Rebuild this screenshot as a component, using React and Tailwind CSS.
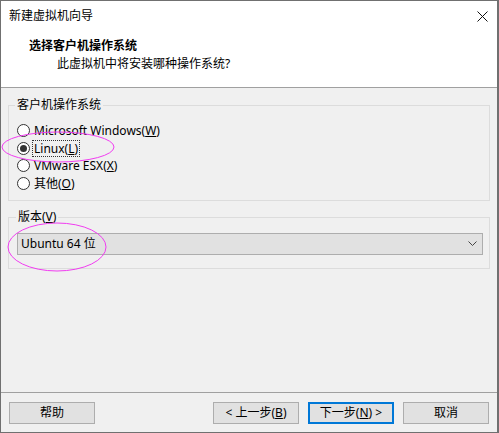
import React from 'react';

const Radio = ({ checked, children, focus }) => (
  <label className="flex items-center h-[17.5px] cursor-default">
    <span className="w-[13px] h-[13px] ml-[8px] rounded-full border border-[#333333] bg-white flex items-center justify-center">
      {checked && <span className="w-[7px] h-[7px] rounded-full bg-[#333333]"></span>}
    </span>
    <span className={`ml-[3px] px-[1px] leading-[15px] ${focus ? 'outline outline-1 outline-dotted outline-[#333]' : ''}`}>
      {children}
    </span>
  </label>
);

const Btn = ({ children, primary, className = '' }) => (
  <button
    className={`h-[22px] w-[86px] text-[12px] leading-[16px] text-black bg-[#e1e1e1] ${
      primary ? 'border-2 border-[#0078d7]' : 'border border-[#adadad]'
    } ${className}`}
  >
    {children}
  </button>
);

const App = () => {
  return (
    <div className="relative w-[499px] h-[433px] flex flex-col border border-[#707070] border-r-2 bg-[#f0f0f0] text-[12px] text-black font-['Noto_Sans','Noto_Sans_CJK_SC',sans-serif] select-none overflow-hidden">
      <div className="h-[87px] bg-white border-b border-[#a0a0a0] flex flex-col">
        <div className="h-[29px] flex items-center justify-between pl-[8px] pr-[9px]">
          <span className="leading-[16px]">新建虚拟机向导</span>
          <svg width="11" height="11" viewBox="0 0 11 11" className="mt-[1px]">
            <path d="M0.5 0.5L10.5 10.5M10.5 0.5L0.5 10.5" stroke="#111" strokeWidth="1" />
          </svg>
        </div>
        <div className="mt-[8px] pl-[28px] leading-[16px] font-bold">选择客户机操作系统</div>
        <div className="mt-[2px] pl-[56px] leading-[16px]">此虚拟机中将安装哪种操作系统?</div>
      </div>

      <div className="flex-1 px-[7px]">
        <fieldset className="mt-[9px] border border-[#dcdcdc] pb-[8px] w-[482px]">
          <legend className="ml-[6px] px-[2px] leading-[16px]">客户机操作系统</legend>
          <div className="pt-[9px] flex flex-col">
            <Radio>
              Microsoft Windows(<u>W</u>)
            </Radio>
            <Radio checked focus>
              Linux(<u>L</u>)
            </Radio>
            <Radio>
              VMware ESX(<u>X</u>)
            </Radio>
            <Radio>
              其他(<u>O</u>)
            </Radio>
          </div>
        </fieldset>

        <fieldset className="mt-[8px] border border-[#dcdcdc] pb-[13px] w-[482px]">
          <legend className="ml-[7px] px-[2px] leading-[16px]">
            版本(<u>V</u>)
          </legend>
          <div className="mt-[8px] ml-[8px] mr-[6px] h-[22px] bg-[#e1e1e1] border border-[#adadad] flex items-center justify-between pl-[3px] pr-[5px]">
            <span className="leading-[16px]">Ubuntu 64 位</span>
            <svg width="9" height="6" viewBox="0 0 9 6">
              <path d="M0.5 0.5L4.5 4.5L8.5 0.5" stroke="#444" strokeWidth="1" fill="none" />
            </svg>
          </div>
        </fieldset>
      </div>

      <div className="h-[40px] border-t border-[#a0a0a0] flex items-start pt-[9px] px-[8px]">
        <Btn>帮助</Btn>
        <div className="flex-1"></div>
        <Btn>
          &lt; 上一步(<u>B</u>)
        </Btn>
        <Btn primary className="ml-[9px]">
          下一步(<u>N</u>) &gt;
        </Btn>
        <Btn className="ml-[9px]">取消</Btn>
      </div>

      <svg className="absolute left-0 top-0 pointer-events-none" width="499" height="433">
        <ellipse cx="57" cy="146" rx="56" ry="15" fill="none" stroke="#f03cf0" strokeWidth="1" />
        <ellipse cx="56" cy="246" rx="49" ry="24" fill="none" stroke="#f03cf0" strokeWidth="1" />
      </svg>
    </div>
  );
};

export default App;
